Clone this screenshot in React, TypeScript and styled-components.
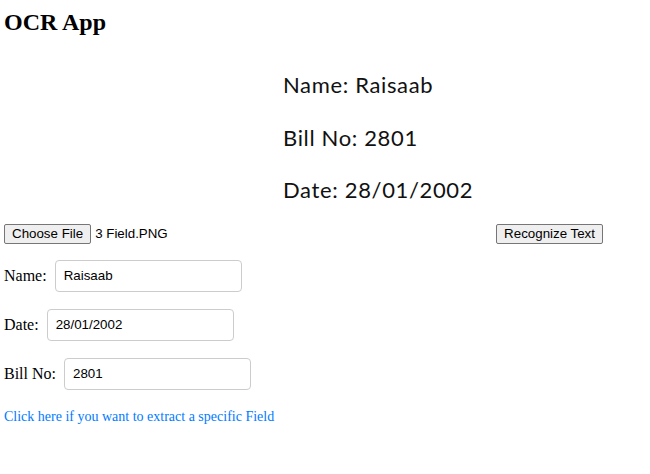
import React from "react";
import styled, { createGlobalStyle } from "styled-components";

const GlobalStyle = createGlobalStyle`
  html, body {
    margin: 0;
    padding: 0;
    background: #ffffff;
  }
  body {
    font-family: "Liberation Serif", "Times New Roman", serif;
    font-size: 16px;
    color: #000000;
  }
`;

const Page = styled.div`
  padding: 0 4px;
`;

const Title = styled.h2`
  margin: 9px 0 0;
  font-size: 24px;
  line-height: 27px;
  font-weight: bold;
  font-family: "Liberation Serif", "Times New Roman", serif;
`;

const Preview = styled.div`
  margin: 23px 0 0 279px;
  font-family: Lato, "Open Sans", sans-serif;
  font-size: 22px;
  line-height: 52.5px;
  letter-spacing: 0.65px;
  color: #111111;
`;

const PreviewLine = styled.div``;

const FileRow = styled.div`
  display: flex;
  align-items: center;
  margin-top: 7px;
  width: 599px;
`;

const FilePicker = styled.div`
  display: flex;
  align-items: center;
  flex: 1;
`;

const NativeButton = styled.button`
  font-family: "Liberation Sans", Arial, sans-serif;
  font-size: 13.333px;
  line-height: 16px;
  padding: 1px 7px;
  margin: 0;
  color: #000000;
  background: #efefef;
  border: 1px solid #767676;
  border-radius: 2px;
  cursor: default;
`;

const FileName = styled.span`
  margin-left: 4px;
  font-family: "Liberation Sans", Arial, sans-serif;
  font-size: 13.333px;
`;

const Form = styled.div`
  display: flex;
  flex-direction: column;
  gap: 17px;
  margin-top: 16px;
`;

const Field = styled.label`
  display: flex;
  align-items: center;
  gap: 8px;
  font-size: 16px;
`;

const TextInput = styled.input`
  box-sizing: border-box;
  width: 187px;
  height: 32px;
  padding: 0 8px;
  border: 1px solid #cccccc;
  border-radius: 4px;
  font-family: "Liberation Sans", Arial, sans-serif;
  font-size: 13.333px;
  color: #000000;
  outline: none;
`;

const ExtractLink = styled.a`
  display: block;
  margin-top: 19px;
  font-size: 14px;
  line-height: 16px;
  color: #007bff;
  text-decoration: none;
  cursor: pointer;
`;

const fields = [
  { label: "Name:", value: "Raisaab" },
  { label: "Date:", value: "28/01/2002" },
  { label: "Bill No:", value: "2801" },
];

export default function App() {
  return (
    <>
      <GlobalStyle />
      <Page>
        <Title>OCR App</Title>
        <Preview>
          <PreviewLine>Name: Raisaab</PreviewLine>
          <PreviewLine>Bill No: 2801</PreviewLine>
          <PreviewLine>Date: 28/01/2002</PreviewLine>
        </Preview>
        <FileRow>
          <FilePicker>
            <NativeButton type="button">Choose File</NativeButton>
            <FileName>3 Field.PNG</FileName>
          </FilePicker>
          <NativeButton type="button">Recognize Text</NativeButton>
        </FileRow>
        <Form>
          {fields.map((f) => (
            <Field key={f.label}>
              <span>{f.label}</span>
              <TextInput defaultValue={f.value} />
            </Field>
          ))}
        </Form>
        <ExtractLink>Click here if you want to extract a specific Field</ExtractLink>
      </Page>
    </>
  );
}
